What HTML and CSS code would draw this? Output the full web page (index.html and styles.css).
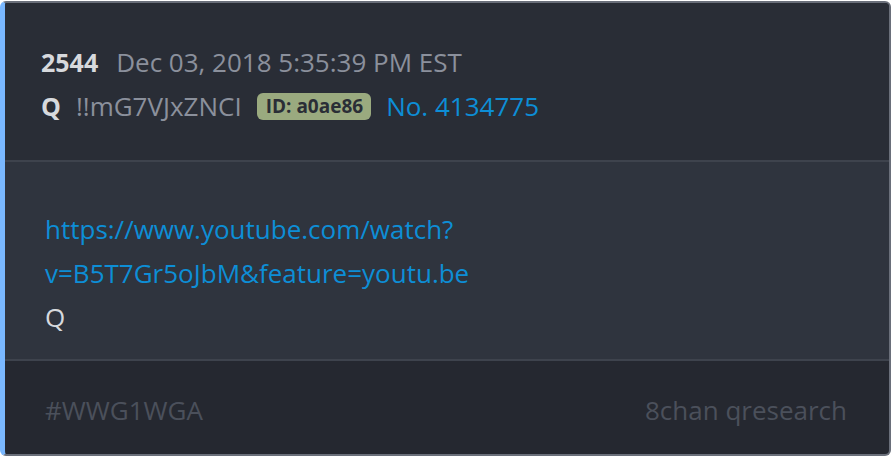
FILE: index.html
```html
<!DOCTYPE html>
<html>
<head>
<meta charset="utf-8">
<link rel="stylesheet" href="styles.css">
</head>
<body>
<div class="card">
  <div class="head">
    <div class="row">
      <span class="num">2544</span>
      <span class="date">Dec 03, 2018 5:35:39 PM EST</span>
    </div>
    <div class="row">
      <span class="name">Q</span>
      <span class="trip">!!mG7VJxZNCI</span>
      <span class="id">ID: a0ae86</span>
      <span class="no">No. 4134775</span>
    </div>
  </div>
  <div class="body">
    <a class="link" href="#">https://www.youtube.com/watch?<br>v=B5T7Gr5oJbM&amp;feature=youtu.be</a>
    <div class="sig">Q</div>
  </div>
  <div class="foot">
    <span>#WWG1WGA</span>
    <span>8chan qresearch</span>
  </div>
</div>
</body>
</html>
```

FILE: styles.css
```css
html, body {
  margin: 0;
  padding: 0;
  background: #ffffff;
}
body {
  font-family: "Open Sans", "Noto Sans", sans-serif;
}
.card {
  box-sizing: border-box;
  width: 891px;
  height: 455px;
  margin-top: 1px;
  border: 2px solid #6a6f7a;
  border-left: 5px solid #7ab8ff;
  border-radius: 6px;
  overflow: hidden;
  display: flex;
  flex-direction: column;
  background: #252830;
}
.head {
  background: #292d36;
  height: 159px;
  box-sizing: border-box;
  padding: 37px 0 0 36px;
  border-bottom: 2px solid #3e434d;
}
.row {
  display: flex;
  align-items: center;
  height: 44px;
  font-size: 26px;
}
.num, .name {
  color: #d7d9dd;
  font-weight: 700;
  margin-right: 18px;
  font-size: 25px;
}
.name { margin-right: 15px; }
.date, .trip {
  color: #8b909c;
}
.trip { margin-right: 15px; }
.id {
  background: #9aaa7f;
  color: #2a2e36;
  font-weight: 700;
  font-size: 19px;
  line-height: 21px;
  padding: 3px 8px 3px 9px;
  border-radius: 6px;
  margin-right: 15px;
}
.no {
  color: #0d8ed6;
}
.body {
  background: #2f343e;
  height: 199px;
  box-sizing: border-box;
  padding: 45px 0 0 40px;
  border-bottom: 2px solid #3e434d;
  font-size: 26px;
  line-height: 44px;
}
.link {
  color: #0d8ed6;
  text-decoration: none;
}
.sig {
  color: #d7d9dd;
}
.foot {
  flex: 1;
  display: flex;
  justify-content: space-between;
  align-items: center;
  padding: 5px 42px 0 40px;
  font-size: 26px;
  color: #4b505b;
}
```
